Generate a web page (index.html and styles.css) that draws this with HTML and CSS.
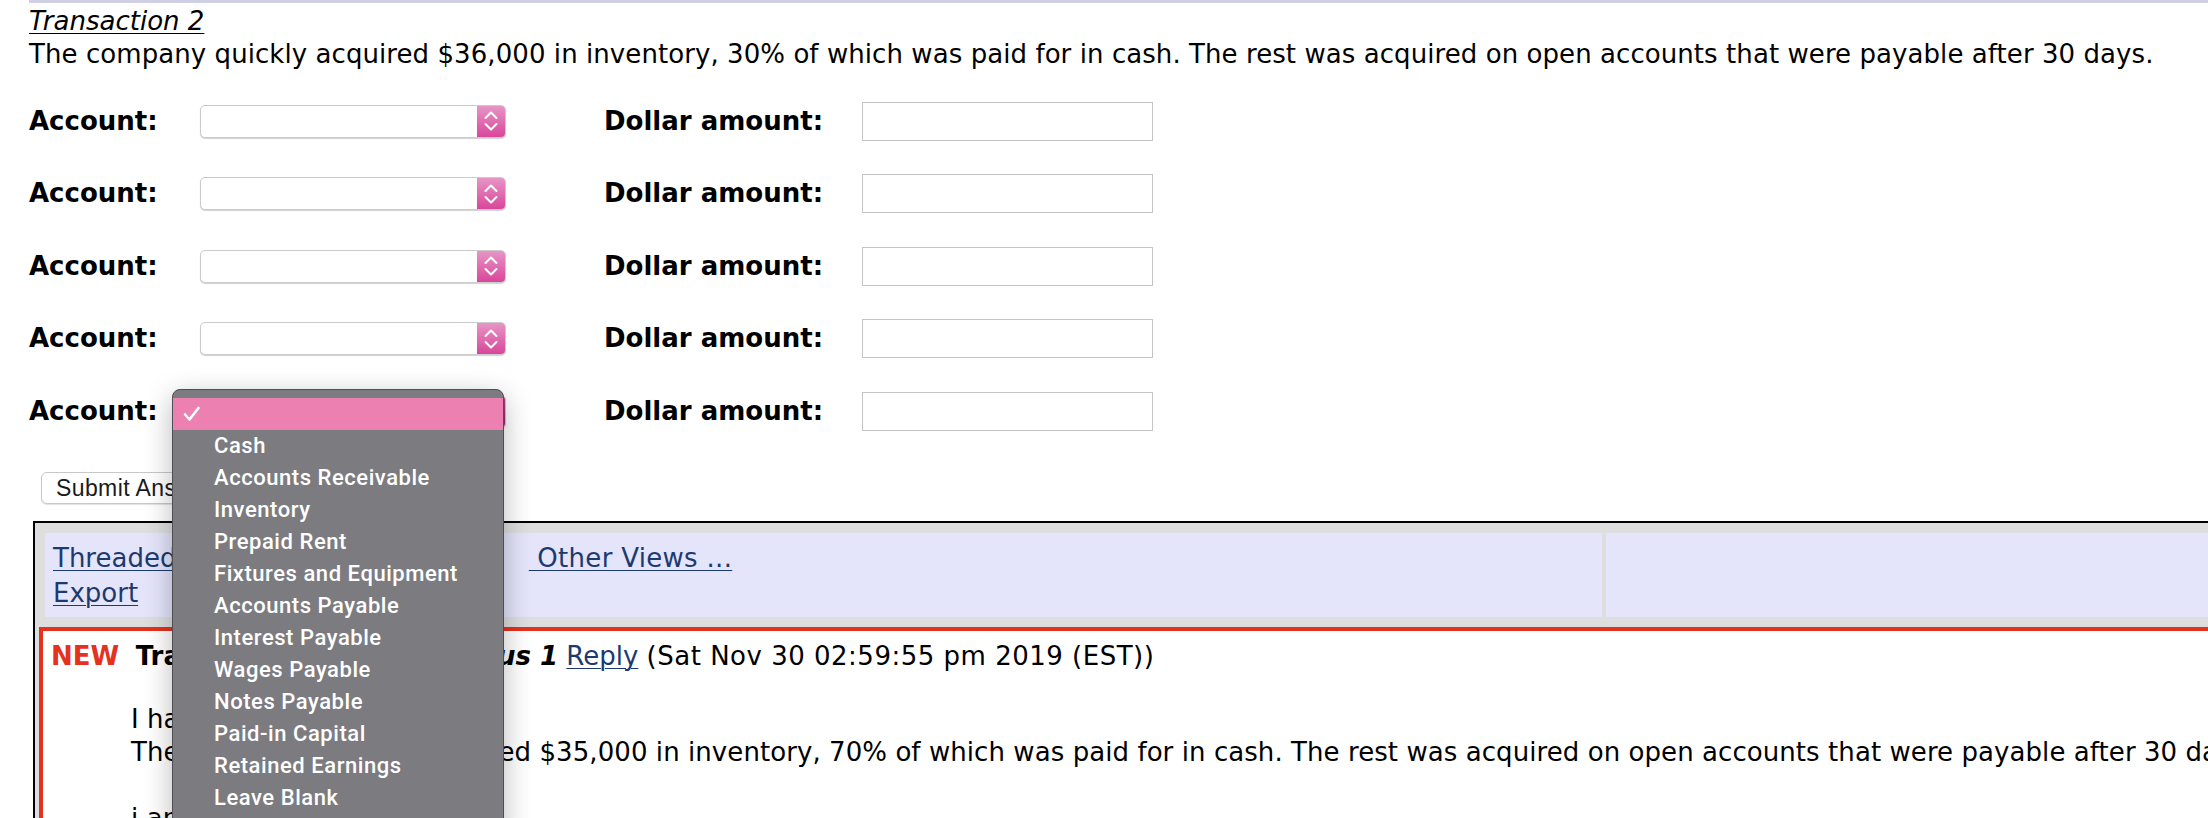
FILE: index.html
```html
<!DOCTYPE html>
<html>
<head>
<meta charset="utf-8">
<title>Transaction 2</title>
<link rel="stylesheet" href="styles.css">
</head>
<body>
<div class="page">
  <div class="rule"></div>
  <div class="heading">Transaction 2</div>
  <p class="question">The company quickly acquired $36,000 in inventory, 30% of which was paid for in cash. The rest was acquired on open accounts that were payable after 30 days.</p>

  <div class="entries">
    <span class="label">Account:</span>
    <div class="select"><span class="select-arrow"><svg width="14" height="22" viewBox="0 0 14 22"><path d="M1.5 8 L7 2.5 L12.5 8 M1.5 14 L7 19.5 L12.5 14" fill="none" stroke="#fff" stroke-width="2" stroke-linecap="round" stroke-linejoin="round"/></svg></span></div>
    <span class="label">Dollar amount:</span>
    <div class="amount"></div>

    <span class="label">Account:</span>
    <div class="select"><span class="select-arrow"><svg width="14" height="22" viewBox="0 0 14 22"><path d="M1.5 8 L7 2.5 L12.5 8 M1.5 14 L7 19.5 L12.5 14" fill="none" stroke="#fff" stroke-width="2" stroke-linecap="round" stroke-linejoin="round"/></svg></span></div>
    <span class="label">Dollar amount:</span>
    <div class="amount"></div>

    <span class="label">Account:</span>
    <div class="select"><span class="select-arrow"><svg width="14" height="22" viewBox="0 0 14 22"><path d="M1.5 8 L7 2.5 L12.5 8 M1.5 14 L7 19.5 L12.5 14" fill="none" stroke="#fff" stroke-width="2" stroke-linecap="round" stroke-linejoin="round"/></svg></span></div>
    <span class="label">Dollar amount:</span>
    <div class="amount"></div>

    <span class="label">Account:</span>
    <div class="select"><span class="select-arrow"><svg width="14" height="22" viewBox="0 0 14 22"><path d="M1.5 8 L7 2.5 L12.5 8 M1.5 14 L7 19.5 L12.5 14" fill="none" stroke="#fff" stroke-width="2" stroke-linecap="round" stroke-linejoin="round"/></svg></span></div>
    <span class="label">Dollar amount:</span>
    <div class="amount"></div>

    <span class="label">Account:</span>
    <div class="select select-open"><span class="select-arrow"></span></div>
    <span class="label">Dollar amount:</span>
    <div class="amount"></div>
  </div>

  <button class="submit">Submit Answer</button>

  <div class="board">
    <div class="nav">
      <div class="nav-cell nav-main">
        <a href="#">Threaded View</a> <a href="#">Chronological View</a>&nbsp;&nbsp;&nbsp;<a href="#" class="other">&nbsp;Other Views ...</a><br>
        <a href="#">Export</a>
      </div>
      <div class="nav-cell nav-side"></div>
    </div>
    <div class="post">
      <div class="post-head"><span class="new">NEW</span>&nbsp; <b>Transaction 2 Help!!</b> <b><i>Bonus 1</i></b> <a href="#">Reply</a> <span class="stamp">(Sat Nov 30 02:59:55 pm 2019 (EST))</span></div>
      <div class="post-body">I have this one too<br>The company quickly acquired $35,000 in inventory, 70% of which was paid for in cash. The rest was acquired on open accounts that were payable after 30 days.<br><br>i am confused</div>
    </div>
  </div>

  <div class="menu">
    <div class="menu-top"></div>
    <div class="menu-selected"><svg width="18" height="16" viewBox="0 0 18 16"><path d="M2 8.5 L6.5 13.5 L15.5 2" fill="none" stroke="#fff" stroke-width="2.6" stroke-linecap="round" stroke-linejoin="round"/></svg></div>
    <ul class="menu-list">
      <li>Cash</li>
      <li>Accounts Receivable</li>
      <li>Inventory</li>
      <li>Prepaid Rent</li>
      <li>Fixtures and Equipment</li>
      <li>Accounts Payable</li>
      <li>Interest Payable</li>
      <li>Wages Payable</li>
      <li>Notes Payable</li>
      <li>Paid-in Capital</li>
      <li>Retained Earnings</li>
      <li>Leave Blank</li>
    </ul>
  </div>
</div>
</body>
</html>
```

FILE: styles.css
```css
html, body {
  margin: 0;
  padding: 0;
  overflow: hidden;
  background: #ffffff;
}

.page {
  position: relative;
  padding-left: 29px;
  font-family: "DejaVu Sans", Verdana, sans-serif;
  font-size: 26px;
  line-height: 33px;
  color: #000;
  width: 2700px;
}

.rule {
  height: 3px;
  background: #cfd0e3;
}

.heading {
  margin-top: 1.5px;
  font-style: italic;
  text-decoration: underline;
  text-decoration-thickness: 1px;
  text-underline-offset: 3px;
}

.question {
  margin: 0;
  white-space: nowrap;
  letter-spacing: 0.07px;
}

.entries {
  margin-top: 14.25px;
  display: grid;
  grid-template-columns: 171px 404px 258px 291px;
  grid-auto-rows: 72.5px;
  align-items: center;
}

.label {
  font-weight: bold;
}

.select {
  position: relative;
  width: 306px;
  height: 33px;
  box-sizing: border-box;
  border: 1px solid #cbcbcb;
  border-radius: 5px;
  background: #fff;
  box-shadow: 0 1px 1px rgba(0, 0, 0, 0.18);
  display: flex;
  justify-content: flex-end;
  overflow: hidden;
}

.select-arrow {
  width: 28px;
  height: 100%;
  background: linear-gradient(#e795c6, #d8469b);
  display: flex;
  align-items: center;
  justify-content: center;
}

.select-open .select-arrow {
  background: linear-gradient(#b0407e, #8c2a62);
}

.amount {
  width: 291px;
  height: 39px;
  box-sizing: border-box;
  border: 1.5px solid #c4c4c4;
  background: #fff;
}

.submit {
  display: block;
  margin: 24.5px 0 0 12px;
  height: 32.5px;
  padding: 0 14px;
  font-family: "Liberation Sans", Arial, sans-serif;
  font-size: 23px;
  letter-spacing: 0.4px;
  color: #1a1a1a;
  background: #fff;
  border: 1px solid #c8c8c8;
  border-radius: 6px;
  box-shadow: 0 1px 1px rgba(0, 0, 0, 0.12);
}

.board {
  margin: 17px 0 0 4px;
  width: 2600px;
  height: 400px;
  border: 2px solid #000;
  background: #dedede;
}

.nav {
  display: flex;
  gap: 4px;
  margin: 10px;
  height: 84px;
}

.nav-cell {
  background: #e4e4fb;
}

.nav-main {
  width: 1557px;
  box-sizing: border-box;
  padding: 8px 8px 0 8px;
  line-height: 35px;
  white-space: nowrap;
}

.other {
  margin-left: 2px;
  letter-spacing: 0.3px;
}

.nav-side {
  flex: 1;
}

a {
  color: #1c3a70;
  text-decoration: underline;
  text-decoration-thickness: 1px;
  text-underline-offset: 3px;
}

.post {
  margin: 0 4px;
  border: 4px solid #e4321f;
  background: #fff;
  height: 300px;
  padding: 8.5px 8px 0 8px;
  white-space: nowrap;
}

.new {
  color: #e4321f;
  font-weight: bold;
}

.stamp {
  letter-spacing: 0.5px;
}

.post-body {
  margin-top: 30px;
  padding-left: 80px;
  letter-spacing: 0.07px;
}

.menu {
  position: absolute;
  left: 172px;
  top: 389px;
  width: 332px;
  box-sizing: border-box;
  height: 450px;
  background: #7c7b80;
  border: 1px solid #4f4f53;
  border-radius: 8px 8px 0 0;
  box-shadow: 0 8px 28px rgba(0, 0, 0, 0.28);
  font-family: Roboto, "Liberation Sans", sans-serif;
  font-weight: 500;
  font-size: 22px;
  letter-spacing: 0.55px;
  color: #fff;
}

.menu-top {
  height: 8px;
}

.menu-selected {
  height: 32px;
  background: #eb80b1;
  display: flex;
  align-items: center;
  padding-left: 10px;
}

.menu-list {
  list-style: none;
  margin: 0;
  padding: 0 0 0 41px;
}

.menu-list li {
  height: 32px;
  line-height: 32px;
}
```
